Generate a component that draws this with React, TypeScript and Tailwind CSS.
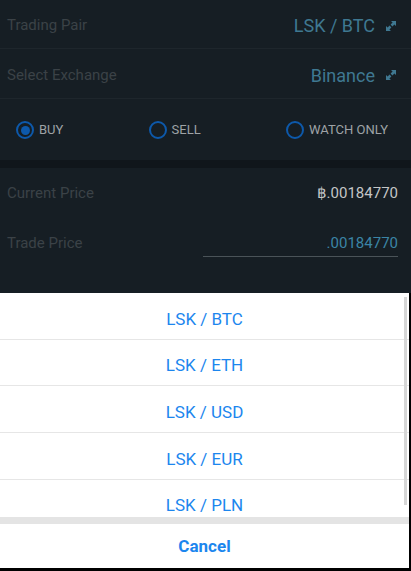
import React from 'react';

const pairs = ['LSK / BTC', 'LSK / ETH', 'LSK / USD', 'LSK / EUR', 'LSK / PLN'];

function ExpandIcon() {
    return (
        <svg width="10" height="10" viewBox="0 0 10 10" className="fill-[#3f7891]">
            <path d="M5 0H10V5L8.4 3.4L6.4 5.4L4.6 3.6L6.6 1.6Z" />
            <path d="M5 10H0V5L1.6 6.6L3.6 4.6L5.4 6.4L3.4 8.4Z" />
        </svg>
    );
}

function Radio({ label, checked }: { label: string; checked?: boolean }) {
    return (
        <div className="flex items-center gap-[5px]">
            <div className="w-[18px] h-[18px] rounded-full border-2 border-[#0d59ab] flex items-center justify-center">
                {checked && <div className="w-[9px] h-[9px] rounded-full bg-[#0d59ab]" />}
            </div>
            <span className="text-[13px] text-[#9ea3a6]">{label}</span>
        </div>
    );
}

export default function App() {
    return (
        <div className="relative w-[411px] h-[571px] overflow-hidden bg-[#161e24] font-['Roboto',sans-serif]">
            <div className="h-[49px] flex items-center justify-between pl-[7px] pr-[15px] pt-[3px] border-b border-[#1e262c]">
                <span className="text-[15px] text-[#3b4247]">Trading Pair</span>
                <div className="flex items-center gap-[11px]">
                    <span className="text-[18px] text-[#3f7891]">LSK / BTC</span>
                    <ExpandIcon />
                </div>
            </div>
            <div className="h-[50px] flex items-center justify-between pl-[7px] pr-[15px] pt-[3px] border-b border-[#1e262c]">
                <span className="text-[15px] text-[#3b4247]">Select Exchange</span>
                <div className="flex items-center gap-[11px]">
                    <span className="text-[18px] text-[#3f7891]">Binance</span>
                    <ExpandIcon />
                </div>
            </div>
            <div className="h-[61px] flex items-center justify-between pl-[16px] pr-[23px] pt-[1px]">
                <Radio label="BUY" checked />
                <Radio label="SELL" />
                <Radio label="WATCH ONLY" />
            </div>
            <div className="h-[8px] bg-[#10161b]" />
            <div className="h-[50px] flex items-center justify-between pl-[7px] pr-[13px]">
                <span className="text-[15px] text-[#3b4247]">Current Price</span>
                <span className="text-[15px] text-[#c4c6c7]">฿.00184770</span>
            </div>
            <div className="h-[52px] flex items-start justify-between pl-[7px] pr-[13px] pt-[14px]">
                <span className="text-[15px] text-[#3b4247]">Trade Price</span>
                <div className="w-[195px] h-[25px] flex items-start justify-end border-b border-[#4a5358]">
                    <span className="text-[15px] text-[#3b85a6]">.00184770</span>
                </div>
            </div>
            <div className="h-[50px] flex items-center justify-between pl-[7px] pr-[13px] pt-[10px]">
                <span className="text-[15px] text-[#3b4247]">Trade Amount</span>
                <span className="text-[15px] text-[#3b4247]">0</span>
            </div>

            {/* action sheet */}
            <div className="absolute left-0 right-0 top-[293px] bottom-0 bg-black flex flex-col">
                <div className="w-[409px] flex-1 bg-white flex flex-col">
                    <div className="relative h-[224px] overflow-hidden">
                        {pairs.map((p) => (
                            <div
                                key={p}
                                className="h-[46.7px] flex items-center justify-center border-b border-[#e6e6e6] pt-[7px] text-[17px] text-[#1c86ee]"
                            >
                                {p}
                            </div>
                        ))}
                        <div className="absolute right-[2px] top-[4px] w-[3px] h-[208px] bg-[#d6d6d6]" />
                    </div>
                    <div className="h-[7px] bg-[#e4e4e4]" />
                    <div className="flex-1 flex items-center justify-center pt-[2px] text-[17px] font-bold text-[#1c86ee]">
                        Cancel
                    </div>
                </div>
                <div className="h-[3px]" />
            </div>
        </div>
    );
}
